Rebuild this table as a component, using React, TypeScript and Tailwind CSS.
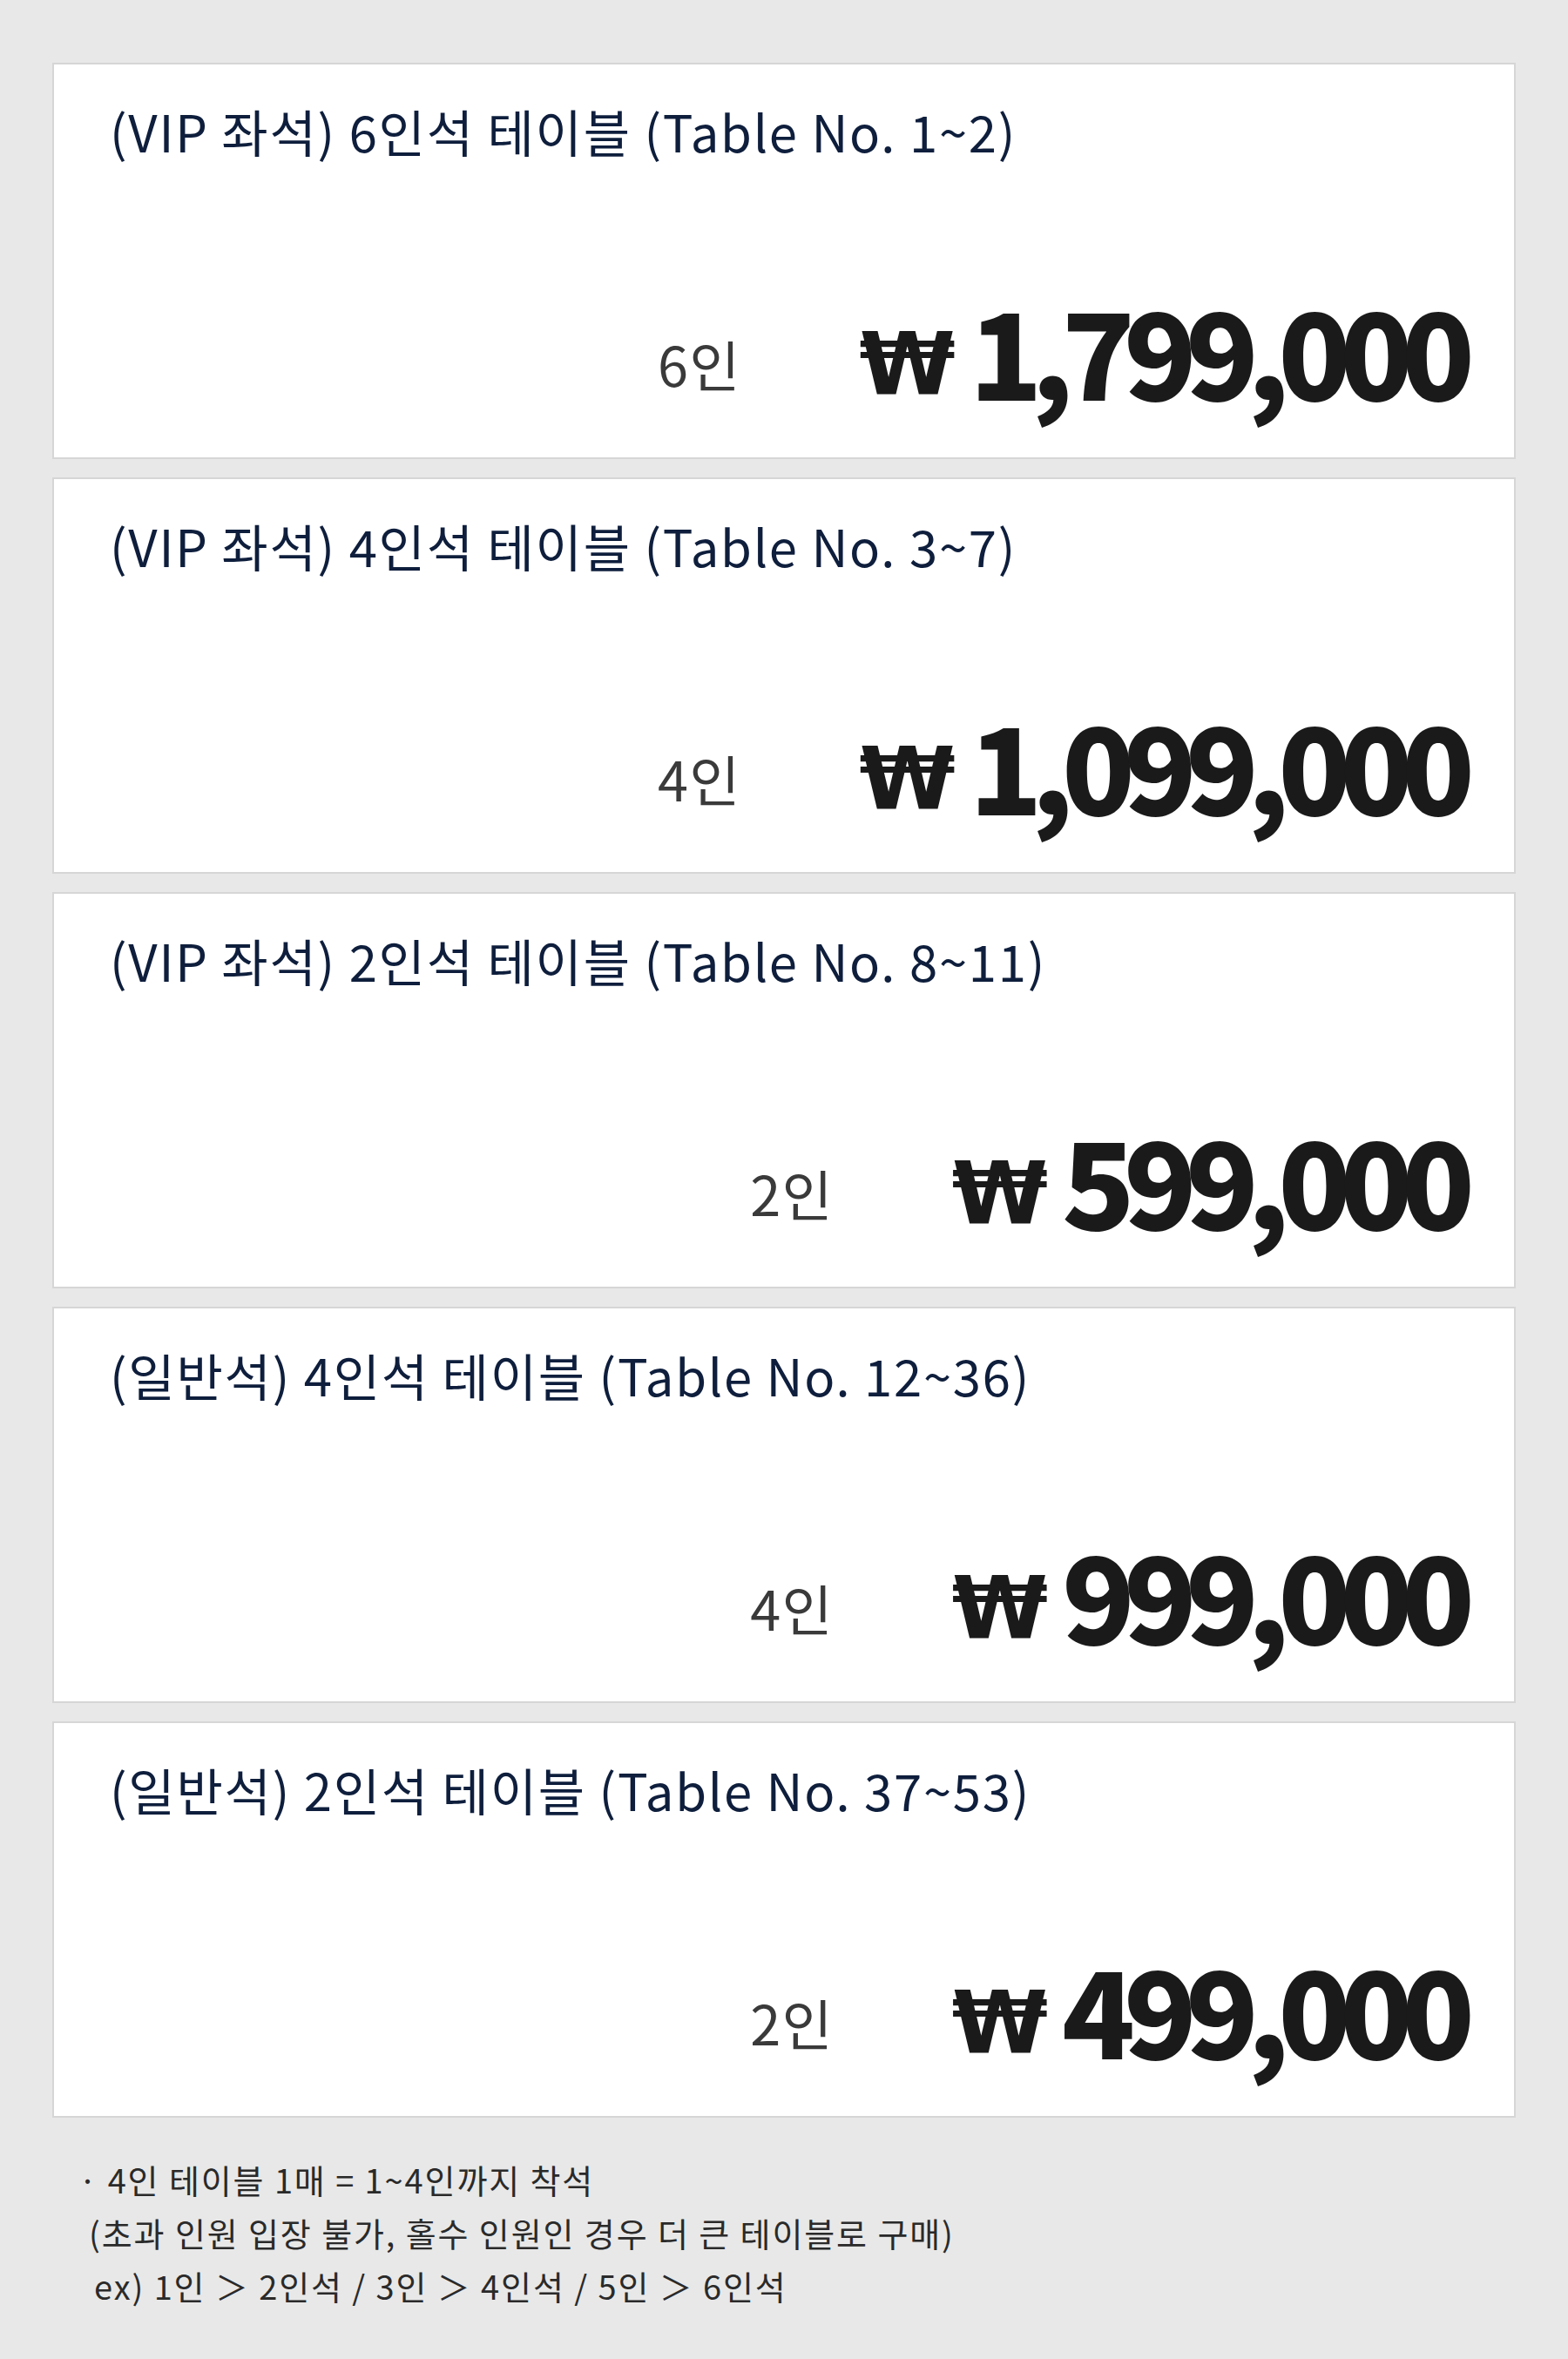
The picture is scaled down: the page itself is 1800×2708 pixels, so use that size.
import React from 'react';

const tables = [
  { title: '(VIP 좌석) 6인석 테이블 (Table No. 1~2)', seats: '6인', price: '1,799,000' },
  { title: '(VIP 좌석) 4인석 테이블 (Table No. 3~7)', seats: '4인', price: '1,099,000' },
  { title: '(VIP 좌석) 2인석 테이블 (Table No. 8~11)', seats: '2인', price: '599,000' },
  { title: '(일반석) 4인석 테이블 (Table No. 12~36)', seats: '4인', price: '999,000' },
  { title: '(일반석) 2인석 테이블 (Table No. 37~53)', seats: '2인', price: '499,000' },
];

const font = { fontFamily: '"Noto Sans CJK KR", "Noto Sans", sans-serif' };

function TableCard({ title, seats, price }: { title: string; seats: string; price: string }) {
  return (
    <div className="h-[455px] bg-white border-2 border-[#d6d6d6] flex flex-col justify-between pt-[42px] pl-[64px] pr-[52px] pb-[56px]">
      <h3 className="text-[58px] leading-[1.2] text-[#0e1e3c] tracking-[0.03em]">{title}</h3>
      <div className="flex items-end justify-end">
        <span className="text-[63px] leading-none text-[#3a3a3a] mb-[21px] mr-[136px] tracking-[0.02em]">{seats}</span>
        <div className="flex items-end gap-[16px] text-[#1a1a1a] font-black leading-none">
          <span className="font-['DejaVu_Sans',sans-serif] font-bold text-[100px]">₩</span>
          <span className="text-[138px] tracking-[-0.095em] mr-[6px]">{price}</span>
        </div>
      </div>
    </div>
  );
}

export default function App() {
  return (
    <div className="min-h-[2708px] bg-[#e8e8e8] px-[60px] pt-[72px] pb-[80px]" style={font}>
      <div className="flex flex-col gap-[21px]">
        {tables.map((t) => (
          <TableCard key={t.title} {...t} />
        ))}
      </div>
      <div className="mt-[40px] pl-[30px] text-[38px] leading-[61px] text-[#2a2a2a] tracking-[0.05em]">
        <p>· 4인 테이블 1매 = 1~4인까지 착석</p>
        <p className="pl-[12px]">(초과 인원 입장 불가, 홀수 인원인 경우 더 큰 테이블로 구매)</p>
        <p className="pl-[18px]">ex) 1인 ＞ 2인석 / 3인 ＞ 4인석 / 5인 ＞ 6인석</p>
      </div>
    </div>
  );
}
